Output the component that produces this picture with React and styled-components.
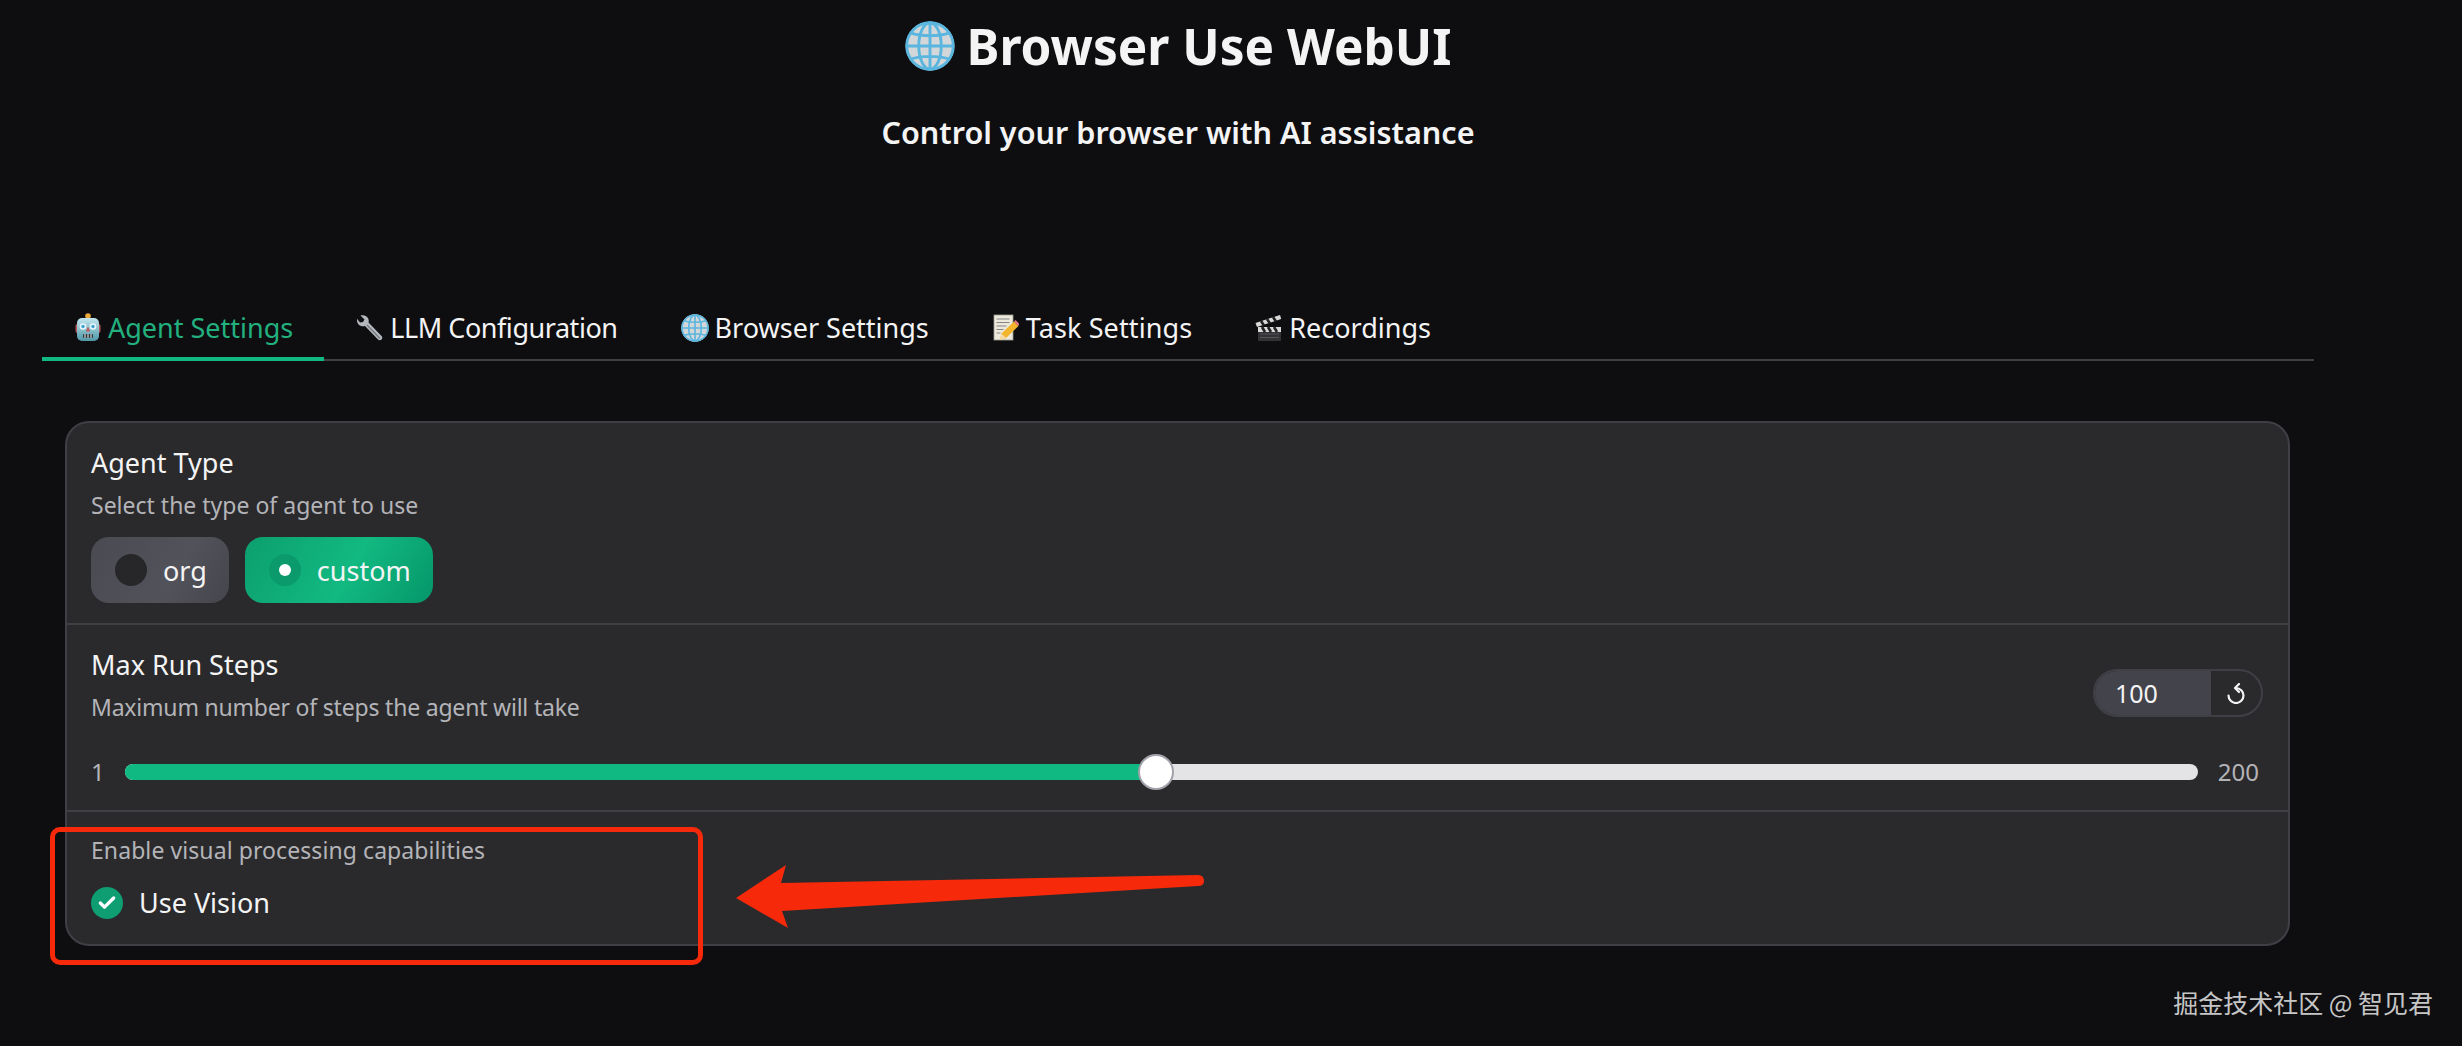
import React from "react";
import styled, { createGlobalStyle } from "styled-components";
import { Check } from "lucide-react";

const Global = createGlobalStyle`
  html, body { margin: 0; padding: 0; background: #0e0e11; }
  body { font-family: "Noto Sans", "Noto Sans CJK SC", sans-serif; }
`;

const Page = styled.div`
  position: relative;
  width: 2462px;
  height: 1046px;
  overflow: hidden;
  background: #0e0e11;
  color: #f4f4f5;
  padding: 0 148px 0 42px;
  box-sizing: border-box;
`;
const Header = styled.header`
  display: flex;
  flex-direction: column;
  align-items: center;
  height: 284px;
`;
const Title = styled.h1`
  margin: 16px 0 0;
  font-size: 49.5px;
  line-height: 60px;
  font-weight: 700;
  display: flex;
  align-items: center;
  gap: 12px;
`;
const Sub = styled.h3`
  margin: 36px 0 0;
  font-size: 30.6px;
  line-height: 40px;
  font-weight: 600;
`;
const TabBar = styled.nav`
  display: flex;
  height: 77px;
  border-bottom: 2px solid #3f3f46;
  box-sizing: border-box;
`;
const Tab = styled.div`
  display: flex;
  align-items: center;
  gap: 6px;
  padding: 14px 31px 0 32px;
  font-size: 27px;
  letter-spacing: ${p => p.$track || 0}px;
  margin-bottom: -2px;
  box-sizing: border-box;
  border-bottom: 4px solid ${p => (p.$active ? "#10b981" : "transparent")};
  color: ${p => (p.$active ? "#22b07f" : "#f4f4f5")};
`;
const TabIcon = styled.span`
  width: 28px;
  height: 30px;
  display: flex;
  align-items: center;
  justify-content: center;
  flex: none;
`;
const Card = styled.section`
  margin: 60px 24px 0 23px;
  height: 525px;
  box-sizing: border-box;
  background: #2a2a2d;
  border: 2px solid #3f3f46;
  border-radius: 24px;
  overflow: hidden;
`;
const Block = styled.div`
  padding: ${p => p.$pad};
  height: ${p => p.$h}px;
  box-sizing: border-box;
  border-bottom: ${p => (p.$last ? "none" : "2px solid #3f3f46")};
`;
const Label = styled.div`
  font-size: 27px;
  line-height: 36px;
  color: #f4f4f5;
`;
const Info = styled.div`
  font-size: 23px;
  line-height: 30px;
  letter-spacing: ${p => p.$track || 0}px;
  margin-top: ${p => (p.$flush ? "0" : "9px")};
  color: #b4b4b8;
`;
const Radios = styled.div`
  display: flex;
  gap: 16px;
  margin-top: 17px;
`;
const Radio = styled.div`
  display: flex;
  align-items: center;
  gap: 16px;
  height: 66px;
  padding: 0 22px 0 24px;
  border-radius: 18px;
  font-size: 27px;
  background: ${p => (p.$on ? "linear-gradient(120deg,#0c9f6e,#12b981 55%,#059669)" : "linear-gradient(120deg,#4a4a52,#52525b 60%,#45454c)")};
`;
const Dot = styled.span`
  width: 32px;
  height: 32px;
  border-radius: 50%;
  display: flex;
  align-items: center;
  justify-content: center;
  background: ${p => (p.$on ? "#0a9a6c" : "#27272a")};
  &::after {
    content: "";
    width: ${p => (p.$on ? "12px" : "0")};
    height: ${p => (p.$on ? "12px" : "0")};
    border-radius: 50%;
    background: #fff;
  }
`;
const Row = styled.div`
  display: flex;
  justify-content: space-between;
  align-items: flex-start;
`;
const NumBox = styled.div`
  display: flex;
  width: 170px;
  height: 48px;
  border: 2px solid #3f3f46;
  border-radius: 24px;
  overflow: hidden;
  box-sizing: border-box;
  margin: 22px 1px 0 0;
`;
const NumVal = styled.div`
  width: 116px;
  background: #43434b;
  font-size: 25px;
  display: flex;
  align-items: center;
  padding-left: 20px;
  box-sizing: border-box;
`;
const Reset = styled.div`
  flex: 1;
  display: flex;
  align-items: center;
  justify-content: center;
`;
const SliderRow = styled.div`
  display: flex;
  align-items: center;
  gap: 20px;
  margin: 33px 5px 0 0;
  font-size: 24px;
  color: #b4b4b8;
`;
const Track = styled.div`
  position: relative;
  flex: 1;
  height: 16px;
  border-radius: 8px;
  background: #e4e4e7;
`;
const Fill = styled.div`
  height: 100%;
  border-radius: 8px 0 0 8px;
  background: #10b981;
`;
const Thumb = styled.div`
  position: absolute;
  top: 50%;
  width: 36px;
  height: 36px;
  box-sizing: border-box;
  transform: translate(-50%, -50%);
  border-radius: 50%;
  background: #fff;
  border: 2px solid #a1a1aa;
`;
const CheckRow = styled.div`
  display: flex;
  align-items: center;
  gap: 16px;
  margin-top: 19px;
  font-size: 27px;
`;
const CheckMark = styled.span`
  width: 32px;
  height: 32px;
  border-radius: 50%;
  background: #0f9d72;
  display: flex;
  align-items: center;
  justify-content: center;
  color: #fff;
`;
const RedBox = styled.div`
  position: absolute;
  left: 50px;
  top: 827px;
  width: 653px;
  height: 138px;
  box-sizing: border-box;
  border: 5px solid #f62a0a;
  border-radius: 10px;
`;
const ArrowSvg = styled.svg`
  position: absolute;
  left: 720px;
  top: 850px;
`;
const Watermark = styled.div`
  position: absolute;
  right: 29px;
  top: 986px;
  font-size: 25px;
  line-height: 32px;
  color: #c6c6c6;
  font-family: "Noto Sans CJK SC", "Noto Sans", sans-serif;
`;

const Globe = ({ s }) => (
  <svg width={s} height={s} viewBox="0 0 40 40">
    <circle cx="20" cy="20" r="19.500" fill="#d3d7da" />
    <g fill="none" stroke="#5ab6de" strokeWidth="2.300">
      <circle cx="20" cy="20" r="18.600" />
      <ellipse cx="20" cy="20" rx="9" ry="18.600" />
      <path d="M20 1.500v37M1.500 20h37M4.500 9.500c8 3 23 3 31 0M4.500 30.500c8-3 23-3 31 0" />
    </g>
  </svg>
);
const Robot = () => (
  <svg width="26" height="29" viewBox="0 0 26 29">
    <defs>
      <linearGradient id="robotHead" x1="0" y1="0" x2="0" y2="1">
        <stop offset="0" stopColor="#c4e6ee" />
        <stop offset="1" stopColor="#4e98a8" />
      </linearGradient>
    </defs>
    <circle cx="13" cy="3" r="2.800" fill="#eda93a" />
    <rect x="0.500" y="11" width="25" height="9" rx="2" fill="#b9545c" />
    <rect x="2" y="5" width="22" height="23" rx="5" fill="url(#robotHead)" />
    <circle cx="8" cy="13.500" r="3.300" fill="#e8f6fb" />
    <circle cx="18" cy="13.500" r="3.300" fill="#e8f6fb" />
    <circle cx="8" cy="13.500" r="1.700" fill="#3da3d0" />
    <circle cx="18" cy="13.500" r="1.700" fill="#3da3d0" />
    <path d="M13 13.500l2 5h-4z" fill="#c9505a" />
    <rect x="8" y="21" width="10" height="4" rx="1" fill="#27343a" />
    <path d="M10 21v4M13 21v4M16 21v4" stroke="#e7e7e7" strokeWidth="1.100" />
  </svg>
);
const Wrench = () => (
  <svg width="27" height="27" viewBox="0 0 27 27">
    <path d="M3.500 1.500 7.500 5.500 6 8 3 8.500-0.100 4.500C-0.500 8 1 11 4 12c1.600.5 3 .3 4-.1L21 25.500c1 1 2.500 1 3.500 0s1-2.500 0-3.500L11.500 8.500c.7-2-.1-4.500-2-6-1.800-1.200-4-1.500-6-1z" fill="#b5b9be" />
    <path d="M10 11 23 24.500" stroke="#73777c" strokeWidth="1.200" />
  </svg>
);
const Memo = () => (
  <svg width="26" height="27" viewBox="0 0 26 27">
    <rect x="1" y="1" width="19" height="25" fill="#ece8da" stroke="#9d9d96" strokeWidth="0.800" />
    <path d="M3.500 5h13M3.500 8.500h13M3.500 12h10M3.500 15.500h7M3.500 19h4" stroke="#85858a" strokeWidth="1" />
    <path d="M7 26l1.500-6.500L21 7.500l4.500 4.500L13 24z" fill="#f2b52c" />
    <path d="M21 7.500l1.500-1.500 4 4-1.500 2z" fill="#e8778a" />
    <path d="M7 26l1.500-6.500 4.500 4.500z" fill="#f6dba6" />
  </svg>
);
const Clapper = () => (
  <svg width="28" height="27" viewBox="0 0 28 27">
    <rect x="3" y="13" width="23" height="14" fill="#333335" rx="1" />
    <path d="M3 13h23v5H3z" fill="#d9d9d9" />
    <path d="M7 13l3 5M13 13l3 5M19 13l3 5" stroke="#222" strokeWidth="2.600" />
    <path d="M5 20h19M5 23.500h19" stroke="#55555a" strokeWidth="1" />
    <path d="M0.500 9 25 1l1.200 4L2 13z" fill="#d9d9d9" />
    <path d="M6 7l3 4.500M12 5l3 4.500M18 3l3 4.500" stroke="#222" strokeWidth="2.600" />
  </svg>
);
const ResetIcon = () => (
  <svg width="18" height="21" viewBox="0 0 18 21" fill="none" stroke="#f4f4f5" strokeWidth="2.200" strokeLinecap="round" strokeLinejoin="round">
    <path d="M9 5a7.500 7.500 0 1 1-7.500 7.500" />
    <path d="M12 1 8 5l4 4" />
  </svg>
);

const tabs = [
  { name: "Agent Settings", icon: <Robot />, active: true },
  { name: "LLM Configuration", icon: <Wrench />, track: -0.45 },
  { name: "Browser Settings", icon: <Globe s={28} /> },
  { name: "Task Settings", icon: <Memo />, track: 0.1 },
  { name: "Recordings", icon: <Clapper /> },
];

const steps = { min: 1, max: 200, value: 100 };
const pct = ((steps.value - steps.min) / (steps.max - steps.min)) * 100;

export default function App() {
  return (
    <Page>
      <Global />
      <Header>
        <Title><Globe s={50} />Browser Use WebUI</Title>
        <Sub>Control your browser with AI assistance</Sub>
      </Header>
      <TabBar>
        {tabs.map(t => (
          <Tab key={t.name} $active={t.active} $track={t.track}><TabIcon>{t.icon}</TabIcon>{t.name}</Tab>
        ))}
      </TabBar>
      <Card>
        <Block $h={202} $pad="22px 24px">
          <Label>Agent Type</Label>
          <Info>Select the type of agent to use</Info>
          <Radios>
            <Radio><Dot />org</Radio>
            <Radio $on><Dot $on />custom</Radio>
          </Radios>
        </Block>
        <Block $h={187} $pad="22px 24px">
          <Row>
            <div>
              <Label>Max Run Steps</Label>
              <Info $track={-0.2}>Maximum number of steps the agent will take</Info>
            </div>
            <NumBox><NumVal>{steps.value}</NumVal><Reset><ResetIcon /></Reset></NumBox>
          </Row>
          <SliderRow>
            <span>{steps.min}</span>
            <Track>
              <Fill style={{ width: `${pct}%` }} />
              <Thumb style={{ left: `${pct}%` }} />
            </Track>
            <span>{steps.max}</span>
          </SliderRow>
        </Block>
        <Block $h={133} $last $pad="23px 24px">
          <Info $flush $track={0.08}>Enable visual processing capabilities</Info>
          <CheckRow><CheckMark><Check size={20} strokeWidth={4} /></CheckMark>Use Vision</CheckRow>
        </Block>
      </Card>
      <RedBox />
      <ArrowSvg width="500" height="90" viewBox="0 0 500 90">
        <path d="M16 48 L66 15 L61 33 L478 25 Q484 25 484 31 Q484 36 478 36 L62 61 L68 78 Z" fill="#f62a0a" />
      </ArrowSvg>
      <Watermark>掘金技术社区 @ 智见君</Watermark>
    </Page>
  );
}
